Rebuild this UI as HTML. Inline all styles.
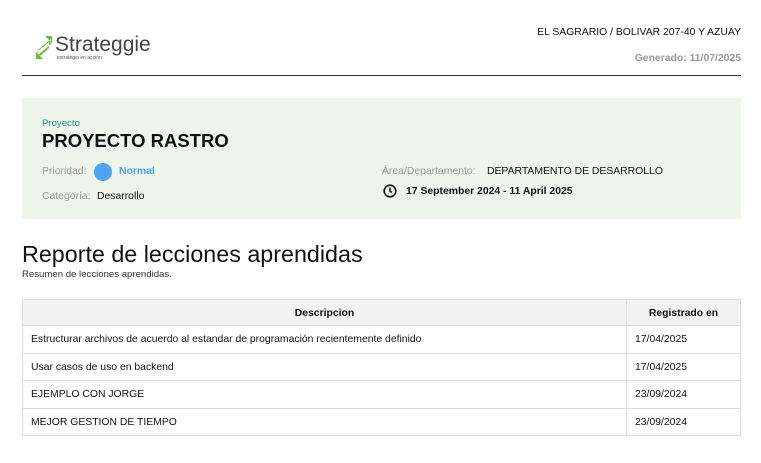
<!DOCTYPE html>
<html><head><meta charset="utf-8"><style>
*{margin:0;padding:0;box-sizing:border-box}
body{width:761px;height:463px;background:#fff;font-family:"Liberation Sans",sans-serif;color:#111;position:relative;overflow:hidden}
.a{position:absolute;white-space:nowrap}
table{position:absolute;left:22px;top:299px;width:719px;border-collapse:collapse;font-size:10.4px}
td,th{border:1px solid #ddd;height:27.5px;padding:1px 8px 0;text-align:left}
th{background:#f2f2f2;font-weight:bold;text-align:center;height:26px}
</style></head><body>
<svg class="a" style="left:36px;top:36px" width="16" height="23" viewBox="0 0 16 23"><path d="M9 0h7v7z M15 3L2 14v5L15 8z M1 16l12-10v6L4 20z M0 23v-7l7 7z" fill="#6cb83a"/></svg>
<div class="a" style="left:55px;top:33px;font-size:21px;color:#444">Strateggie</div>
<div class="a" style="left:57px;top:55px;font-size:5px;color:#555">estrategia en acción</div>
<div class="a" style="right:20px;top:27px;font-size:10.4px">EL SAGRARIO / BOLIVAR 207-40 Y AZUAY</div>
<div class="a" style="right:20px;top:53px;font-size:10.4px;color:#999;font-weight:bold">Generado: 11/07/2025</div>
<div class="a" style="left:22px;top:75px;width:719px;height:1px;background:#333"></div>
<div class="a" style="left:22px;top:98px;width:719px;height:121px;background:#eef6ec"></div>
<div class="a" style="left:42px;top:118px;font-size:9.6px;color:#2a8a8a">Proyecto</div>
<div class="a" style="left:42px;top:130px;font-size:18.5px;font-weight:bold">PROYECTO RASTRO</div>
<div class="a" style="left:42px;top:166px;font-size:10.4px;color:#999">Prioridad:</div>
<div class="a" style="left:94px;top:163px;width:18px;height:18px;border-radius:50%;background:#4da3f5"></div>
<div class="a" style="left:119px;top:166px;font-size:10.4px;color:#4da3f5;font-weight:bold">Normal</div>
<div class="a" style="left:42px;top:191px;font-size:10.4px;color:#999">Categoría:</div>
<div class="a" style="left:97px;top:191px;font-size:10.4px">Desarrollo</div>
<div class="a" style="left:382px;top:166px;font-size:10.4px;color:#999">Área/Departamento:</div>
<div class="a" style="left:487px;top:166px;font-size:10.4px">DEPARTAMENTO DE DESARROLLO</div>
<svg class="a" style="left:383px;top:184px" width="14" height="14" viewBox="0 0 14 14"><circle cx="7" cy="7" r="5.8" fill="none" stroke="#111" stroke-width="1.6"/><path d="M7 3.5V7l2 1.5" fill="none" stroke="#111" stroke-width="1.5"/></svg>
<div class="a" style="left:406px;top:186px;font-size:10.4px;font-weight:bold">17 September 2024 - 11 April 2025</div>
<div class="a" style="left:22px;top:241px;font-size:23.3px">Reporte de lecciones aprendidas</div>
<div class="a" style="left:22px;top:269px;font-size:9.6px;color:#333">Resumen de lecciones aprendidas.</div>
<table>
<tr><th>Descripcion</th><th style="width:114px">Registrado en</th></tr>
<tr><td>Estructurar archivos de acuerdo al estandar de programación recientemente definido</td><td>17/04/2025</td></tr>
<tr><td>Usar casos de uso en backend</td><td>17/04/2025</td></tr>
<tr><td>EJEMPLO CON JORGE</td><td>23/09/2024</td></tr>
<tr><td>MEJOR GESTION DE TIEMPO</td><td>23/09/2024</td></tr>
</table>
</body></html>
